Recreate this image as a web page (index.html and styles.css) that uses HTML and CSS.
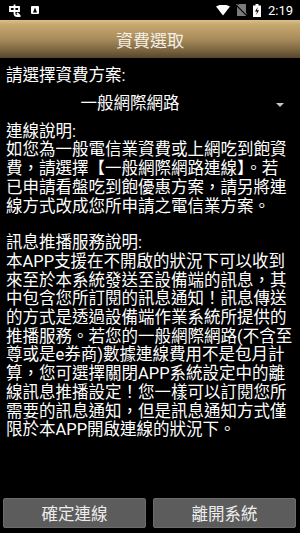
FILE: index.html
```html
<!DOCTYPE html>
<html lang="zh-Hant">
<head>
    <meta charset="UTF-8">
    <meta name="viewport" content="width=device-width, initial-scale=1.0">
    <title>資費選取</title>
    <link rel="stylesheet" href="styles.css">
</head>
<body>
    <div class="status-bar">
        <div class="status-left">
            <svg class="icon-app" width="14" height="13" viewBox="0 0 14 13">
                <path d="M2 3 H11 V7 H2 Z M6.5 0.5 V9.5 Q6.5 12 9.5 12 H12.5 M9 9 L12 12" fill="none" stroke="#fff" stroke-width="1.8"/>
            </svg>
            <svg class="icon-a" width="8" height="8" viewBox="0 0 8 8">
                <rect x="0" y="0" width="8" height="8" rx="1" fill="#fff"/>
                <path d="M2 6.5 L4 1.5 L6 6.5 Z" fill="#000"/>
            </svg>
        </div>
        <div class="status-right">
            <svg width="14" height="11" viewBox="0 0 14 11">
                <path d="M0 1.5 Q7 -2.5 14 1.5 L7 10.5 Z" fill="#fff"/>
            </svg>
            <svg width="11" height="12" viewBox="0 0 11 12">
                <path d="M3 0 H10 V12 H1 V2 Z" fill="#7a7a7a"/>
                <path d="M0 0.5 L11 11.5" stroke="#000" stroke-width="1.6"/>
                <path d="M0.5 0 L11 10.5" stroke="#bbb" stroke-width="0.8"/>
            </svg>
            <svg width="8" height="13" viewBox="0 0 8 13">
                <path d="M2.5 0 H5.5 V1.5 H8 V13 H0 V1.5 H2.5 Z" fill="#fff"/>
                <path d="M4.8 3 L2 7.5 H4 L3.2 11 L6 6.3 H4 Z" fill="#000"/>
            </svg>
            <span class="time">2:19</span>
        </div>
    </div>

    <div class="title-bar">資費選取</div>

    <div class="content">
        <div class="text-line">請選擇資費方案:</div>
        <div class="spinner">
            <div class="spinner-text">一般網際網路</div>
            <div class="spinner-arrow"></div>
        </div>
        <div class="text-line">連線說明:</div>
        <p class="desc">
            如您為一般電信業資費或上網吃到飽資<br>
            費，請選擇【一般網際網路連線】。若<br>
            已申請看盤吃到飽優惠方案，請另將連<br>
            線方式改成您所申請之電信業方案。
        </p>
        <div class="text-line">訊息推播服務說明:</div>
        <p class="desc">
            本APP支援在不開啟的狀況下可以收到<br>
            來至於本系統發送至設備端的訊息，其<br>
            中包含您所訂閱的訊息通知！訊息傳送<br>
            的方式是透過設備端作業系統所提供的<br>
            推播服務。若您的一般網際網路(不含至<br>
            尊或是e券商)數據連線費用不是包月計<br>
            算，您可選擇關閉APP系統設定中的離<br>
            線訊息推播設定！您一樣可以訂閱您所<br>
            需要的訊息通知，但是訊息通知方式僅<br>
            限於本APP開啟連線的狀況下。
        </p>
    </div>

    <div class="buttons">
        <button class="btn">確定連線</button>
        <button class="btn">離開系統</button>
    </div>
</body>
</html>
```

FILE: styles.css
```css
html, body {
    margin: 0;
    padding: 0;
}
body {
    width: 300px;
    height: 533px;
    background-color: #000;
    color: #fff;
    font-family: Roboto, "Noto Sans CJK TC", sans-serif;
    display: flex;
    flex-direction: column;
    overflow: hidden;
}
.status-bar {
    height: 20px;
    display: flex;
    align-items: center;
    justify-content: space-between;
    padding: 0 7px 0 8px;
}
.status-left {
    display: flex;
    align-items: center;
    gap: 9px;
}
.status-right {
    display: flex;
    align-items: center;
    gap: 6px;
}
.time {
    font-family: Roboto, sans-serif;
    font-size: 13px;
    color: #fff;
    margin-left: 1px;
}
.title-bar {
    height: 38px;
    display: flex;
    align-items: center;
    justify-content: center;
    font-family: "Noto Sans CJK TC", sans-serif;
    font-size: 17px;
    color: #f2efe8;
    background: linear-gradient(to bottom, #dcc08a 0%, #c6a770 12%, #a98c5a 50%, #7a6440 80%, #55452b 100%);
}
.content {
    padding: 9px 6px 0;
    font-size: 16.5px;
    line-height: 18.7px;
}
.text-line {
    white-space: nowrap;
}
.spinner {
    height: 36px;
    display: flex;
    align-items: center;
    margin-top: 1px;
}
.spinner-text {
    width: 248px;
    text-align: center;
}
.spinner-arrow {
    margin-left: 22px;
    width: 0;
    height: 0;
    border-left: 4px solid transparent;
    border-right: 4px solid transparent;
    border-top: 4px solid #c4c4c4;
}
.desc {
    margin: 0 0 18px;
    white-space: nowrap;
}
.buttons {
    margin-top: auto;
    display: flex;
    gap: 7px;
    padding: 0 4px 5px 3px;
}
.btn {
    flex: 1;
    height: 30px;
    background-color: #5c5c5c;
    border: 1px solid #6c6c6c;
    border-radius: 2px;
    color: #ececec;
    font-family: "Noto Sans CJK TC", sans-serif;
    font-size: 16.5px;
    padding: 0;
}
```
